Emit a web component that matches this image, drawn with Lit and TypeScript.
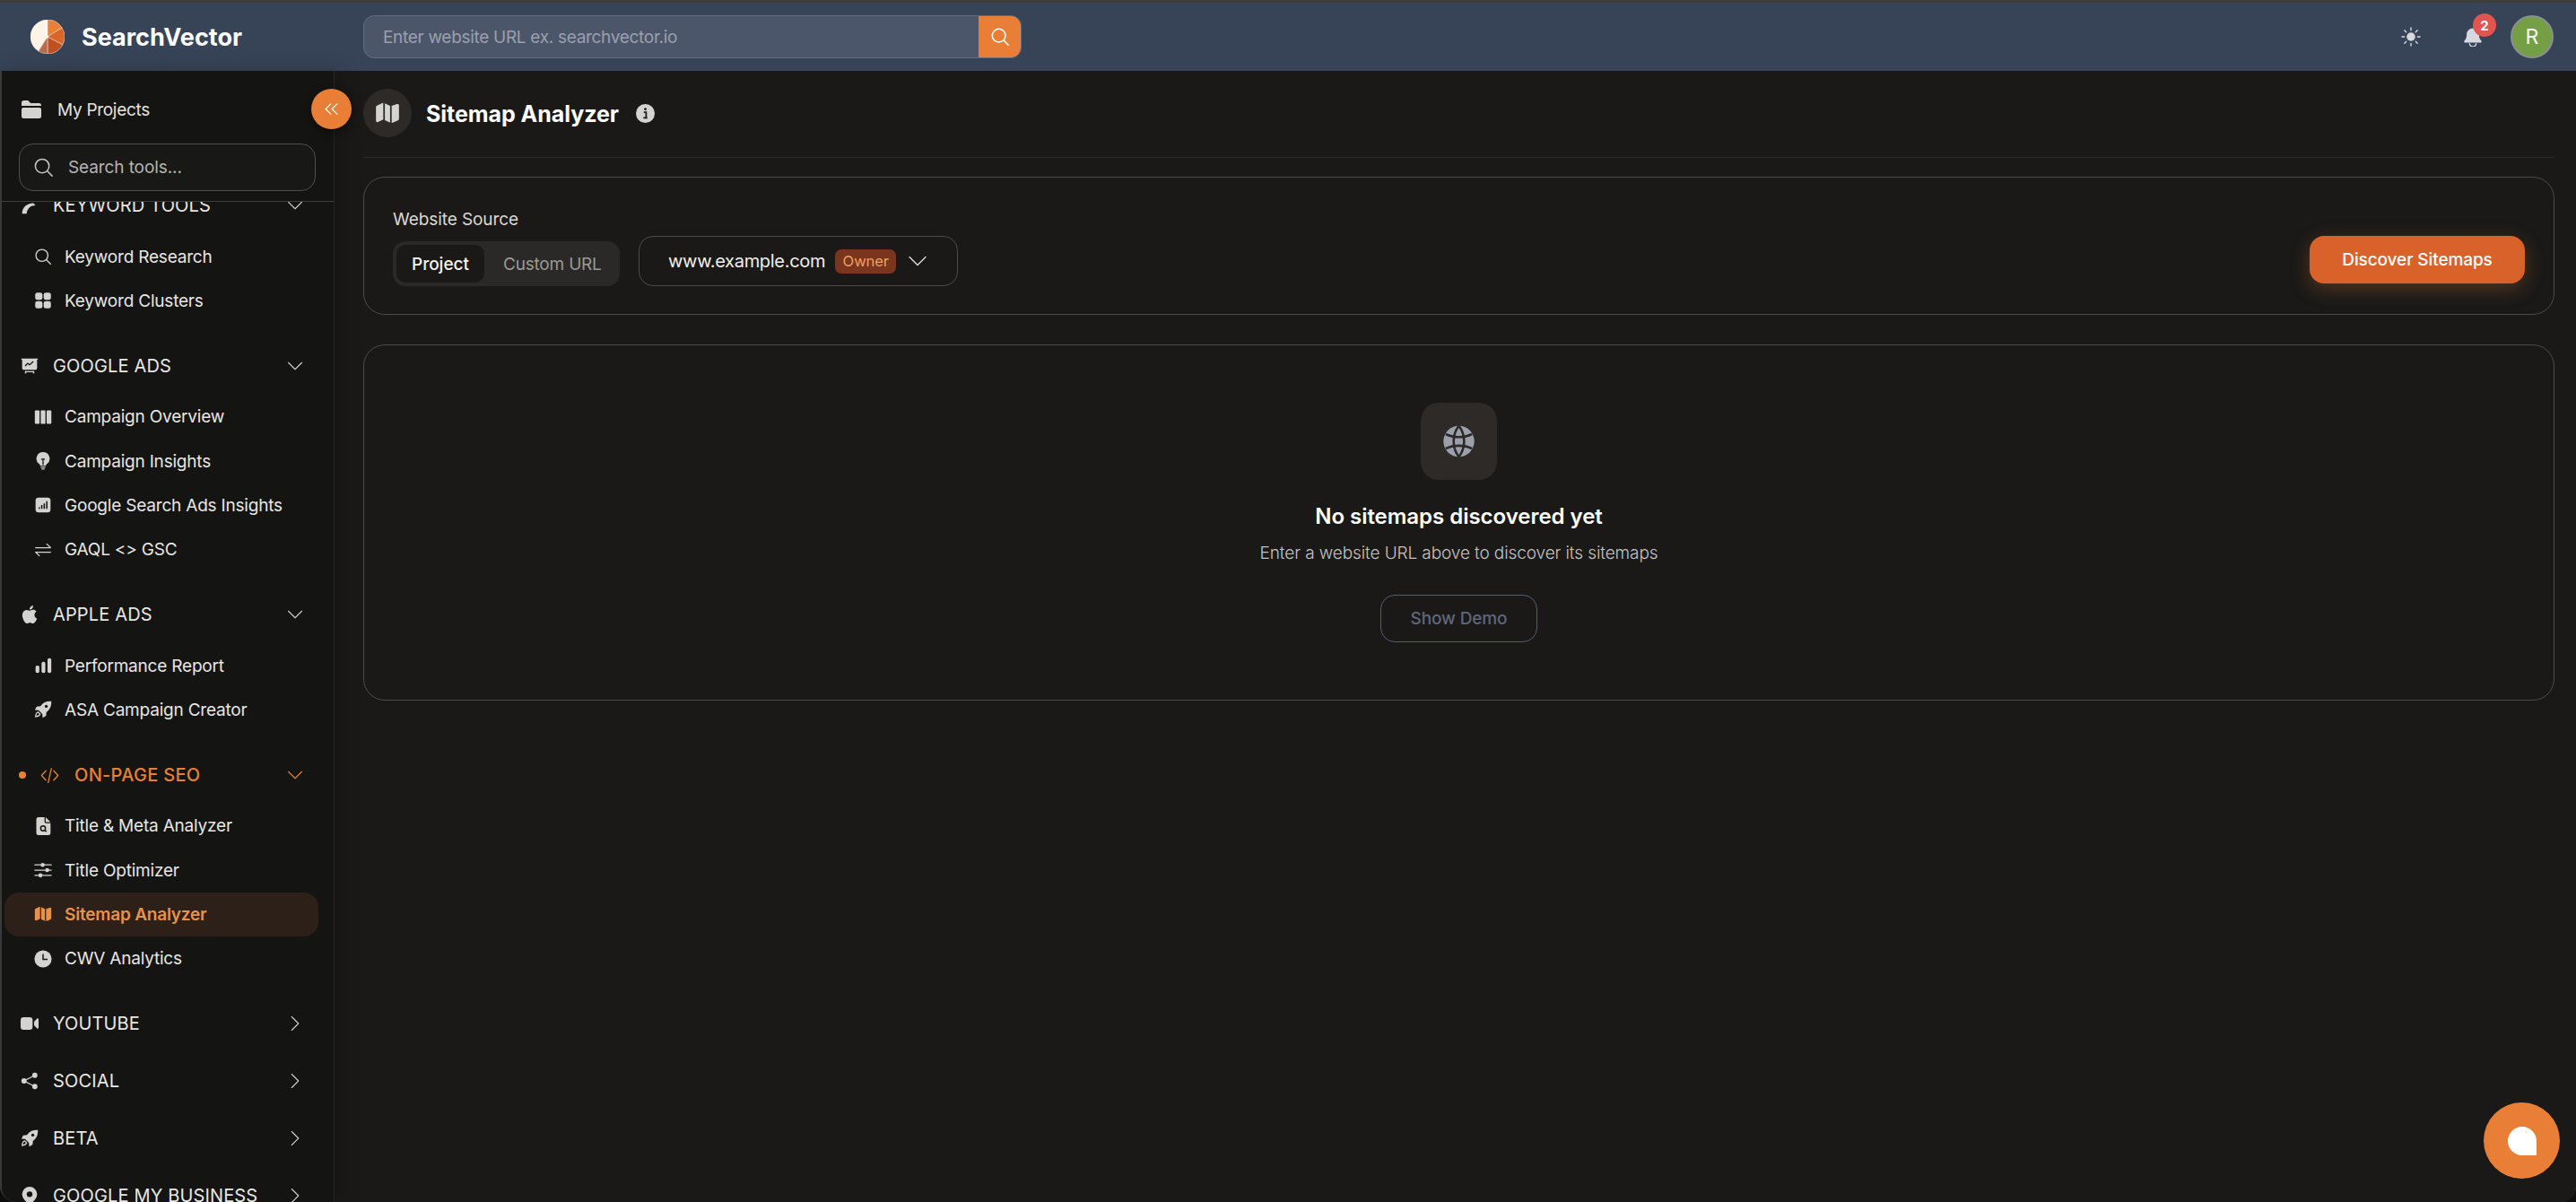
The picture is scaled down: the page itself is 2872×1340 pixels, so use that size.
import { LitElement, html, css, svg } from "lit";
import { customElement } from "lit/decorators.js";

const stroke = (body: unknown, w = 2) => html`<svg viewBox="0 0 24 24" fill="none" stroke="currentColor" stroke-width=${w} stroke-linecap="round" stroke-linejoin="round">${body}</svg>`;
const solid = (body: unknown) => html`<svg viewBox="0 0 24 24" fill="currentColor">${body}</svg>`;
const DARK = "#141413";

const I: Record<string, () => unknown> = {
  search: () => stroke(svg`<circle cx="10.5" cy="10.5" r="8"/><path d="M16.5 16.5 22 22"/>`, 1.6),
  folder: () => solid(svg`<path d="M1 7V4.5A2.5 2.5 0 0 1 3.500 2h4.700l3 3h9.300A2.500 2.500 0 0 1 23 7.300V8H1z"/><path d="M3 10h18a2 2 0 0 1 2 2v7.500a2.500 2.500 0 0 1-2.500 2.500h-17A2.500 2.500 0 0 1 1 19.500V12a2 2 0 0 1 2-2z"/>`),
  keytool: () => solid(svg`<path d="M2 23c0-8 6-14 15-14l3 3c-7 0-11 4-12 11z"/>`),
  grid: () => solid(svg`<rect x="1.500" y="1.500" width="9.700" height="9.700" rx="2.800"/><rect x="12.800" y="1.500" width="9.700" height="9.700" rx="2.800"/><rect x="1.500" y="12.800" width="9.700" height="9.700" rx="2.800"/><rect x="12.800" y="12.800" width="9.700" height="9.700" rx="2.800"/>`),
  board: () => solid(svg`<path d="M1 2h22v1.500h-1V15a2 2 0 0 1-2 2H4a2 2 0 0 1-2-2V3.500H1z"/><path d="M6 18.500h2L7.500 22H5.500zM16 18.500h2l.500 3.500h-2zM8 19h8v1.500H8z"/><path d="M6 12l3.500-3.500 2.500 2 5-4.500" fill="none" stroke="${DARK}" stroke-width="1.600"/>`),
  columns: () => solid(svg`<rect x="1" y="3" width="6.300" height="18" rx="1.200"/><rect x="8.900" y="3" width="6.300" height="18" rx="0.500"/><rect x="16.800" y="3" width="6.300" height="18" rx="1.200"/>`),
  bulb: () => solid(svg`<path d="M12 0a8.800 8.800 0 0 0-5.200 15.900c.800.600 1.400 1.400 1.400 2.300h7.600c0-.900.600-1.700 1.400-2.300A8.800 8.800 0 0 0 12 0z"/><path d="M8.800 19.500h6.400v1.500H8.800zM10 22h4v1.500h-4z"/><path d="M9.500 9.500h5M12 9.500v8" fill="none" stroke="${DARK}" stroke-width="1.500"/>`),
  report: () => solid(svg`<rect x="2" y="2" width="20" height="20" rx="4"/><path d="M7 17v-2M10.300 17v-5M13.600 17v-7M17 17V7" fill="none" stroke="${DARK}" stroke-width="1.800"/>`),
  arrows: () => stroke(svg`<path d="M2 9h20l-5-5M22 15H2l5 5"/>`, 1.500),
  apple: () => solid(svg`<path d="M12.152 6.896c-.948 0-2.415-1.078-3.960-1.040-2.040.027-3.910 1.183-4.961 3.014-2.117 3.675-.546 9.103 1.519 12.090 1.013 1.454 2.208 3.090 3.792 3.039 1.520-.065 2.090-.987 3.935-.987 1.831 0 2.350.987 3.960.948 1.637-.026 2.676-1.480 3.676-2.948 1.156-1.688 1.636-3.325 1.662-3.415-.039-.013-3.182-1.221-3.220-4.857-.026-3.040 2.480-4.494 2.597-4.559-1.429-2.090-3.623-2.324-4.390-2.376-2-.156-3.675 1.090-4.610 1.090zM15.530 3.830c.843-1.012 1.400-2.427 1.245-3.830-1.207.052-2.662.805-3.532 1.818-.780.896-1.454 2.338-1.273 3.714 1.338.104 2.715-.688 3.559-1.701"/>`),
  bars: () => solid(svg`<rect x="2" y="12" width="5" height="10" rx="2.200"/><rect x="10" y="7" width="5" height="15" rx="2.200"/><rect x="18" y="2" width="5" height="20" rx="2.200"/>`),
  rocket: () => solid(svg`<path d="M23 1c-6-.500-11 1.500-14.500 6.500L3.500 8 1 12.500l5 .500 5 5 .500 5 4.500-2.500.500-5C21.500 12 23.500 7 23 1z"/><circle cx="16.300" cy="7.700" r="2" fill="${DARK}"/><path d="M5.500 15.500c-2 .500-3 2-3.500 6 3.500-.500 5.500-1.500 6-3.500z" fill="none" stroke="currentColor" stroke-width="1.500"/>`),
  code: () => stroke(svg`<path d="M7 6 1.500 12 7 18M17 6l5.500 6L17 18M14 3l-4 18"/>`, 1.500),
  docsearch: () => solid(svg`<path d="M3 3a3 3 0 0 1 3-3h8v6a2 2 0 0 0 2 2h6v13a3 3 0 0 1-3 3H6a3 3 0 0 1-3-3z"/><path d="M15.500 0 22 6.500H16a.500.500 0 0 1-.500-.500z"/><circle cx="12" cy="15" r="3.200" fill="none" stroke="${DARK}" stroke-width="1.800"/><path d="m14.500 17.500 2 2" stroke="${DARK}" stroke-width="1.800"/>`),
  sliders: () => stroke(svg`<path d="M1 5h8M14 5h9M1 12h14M20 12h3M1 19h5M11 19h12" stroke-width="1.500"/><circle cx="11.500" cy="5" r="2" fill="currentColor"/><circle cx="17.500" cy="12" r="2" fill="currentColor"/><circle cx="8.500" cy="19" r="2" fill="currentColor"/>`, 1.500),
  map: () => solid(svg`<path d="M8 2.600V18.300L3 20.600c-.900.400-2-.200-2-1.300V6.500c0-.700.400-1.300 1-1.600L7 2.500c.400-.200 1-.100 1 .100zM9.500 2.800l5 2.400v16l-5-2.400zM16 5.200V21.200c0 .200.600.300 1 .100l5-2.200c.600-.300 1-.900 1-1.600V4.800c0-1.100-1.100-1.700-2-1.300z"/>`),
  clock: () => solid(svg`<circle cx="12" cy="12" r="11.500"/><path d="M12 5.500V12.500h6" fill="none" stroke="${DARK}" stroke-width="1.800"/>`),
  video: () => solid(svg`<rect x="0" y="3.500" width="16" height="17" rx="4"/><path d="M18 9.500 22 5.500c.700-.600 2-.100 2 1v11c0 1.100-1.300 1.600-2 1l-4-4z"/>`),
  share: () => solid(svg`<circle cx="19" cy="4.500" r="3.500"/><circle cx="4.500" cy="12" r="3.500"/><circle cx="19" cy="19.500" r="3.500"/><path d="M19 4.500 4.500 12 19 19.500" fill="none" stroke="currentColor" stroke-width="1.600"/>`),
  pin: () => solid(svg`<path d="M12 0a10 10 0 0 0-10 10c0 6.500 7.500 12.500 10 14 2.500-1.500 10-7.500 10-14A10 10 0 0 0 12 0z"/><circle cx="12" cy="10" r="3.800" fill="${DARK}"/>`),
  down: () => stroke(svg`<path d="M3 7.500 12 16.500 21 7.500"/>`, 1.300),
  right: () => stroke(svg`<path d="M7.500 3 16.500 12 7.500 21"/>`, 1.300),
  dbl: () => stroke(svg`<path d="M11 4 3 12l8 8M21 4l-8 8 8 8"/>`, 1.700),
  sun: () => html`<svg viewBox="0 0 24 24" fill="currentColor" stroke="currentColor" stroke-width="1.500" stroke-linecap="round"><circle cx="12" cy="12" r="5.200" stroke="none"/><path d="M12 1v3M12 20v3M1 12h3M20 12h3M4.200 4.200l2 2M17.800 17.800l2 2M4.200 19.800l2-2M17.800 6.200l2-2"/></svg>`,
  bell: () => solid(svg`<path d="M12 1.500A7.500 7.500 0 0 0 4.500 9c0 4-1 6-3 8.300-.500.600-.100 1.700.800 1.700h19.400c.900 0 1.300-1.100.800-1.700-2-2.300-3-4.300-3-8.300A7.500 7.500 0 0 0 12 1.500z"/><path d="M8 20a4 4 0 0 0 8 0" fill="none" stroke="currentColor" stroke-width="1.600"/>`),
  info: () => solid(svg`<circle cx="12" cy="12" r="12"/><circle cx="12" cy="6.500" r="1.600" fill="#1a1918"/><path d="M10 10.500h3v7h1.500M9.500 17.500h3" fill="none" stroke="#1a1918" stroke-width="2"/>`),
  globe: () => solid(svg`<circle cx="12" cy="12" r="11.800"/><g fill="none" stroke="#2d2a28" stroke-width="1.800"><path d="M12 .200C9 4 8 8 8 12s1 8 4 11.800M12 .200C15 4 16 8 16 12s-1 8-4 11.800"/><path d="M2 6.500c3 1.500 6 2.200 10 2.200s7-.700 10-2.200M2 17.500c3-1.500 6-2.200 10-2.200s7 .700 10 2.200"/></g>`),
};

function wedge(a0: number, a1: number, color: string) {
  const p = (a: number) => {
    const r = (a * Math.PI) / 180;
    return `${(19 + 19 * Math.sin(r)).toFixed(2)} ${(19 - 19 * Math.cos(r)).toFixed(2)}`;
  };
  const large = a1 - a0 > 180 ? 1 : 0;
  return svg`<path d="M19 19L${p(a0)}A19 19 0 ${large} 1 ${p(a1)}Z" fill=${color} stroke="#fdf3e7" stroke-width=".5"/>`;
}

const logo = () => html`<svg class="logo" viewBox="0 0 38 38">
  ${wedge(212, 360, "#fdf3e7")}${wedge(0, 58, "#ea7f36")}${wedge(58, 118, "#da652a")}${wedge(118, 180, "#bf5022")}${wedge(180, 212, "#b66c4e")}
  <circle cx="19" cy="19" r="1.200" fill="#fff"/>
</svg>`;

type Item = { i: string; t: string; active?: boolean };
type Group = { i: string; t: string; open?: boolean; active?: boolean; items?: Item[] };

const groups: Group[] = [
  { i: "keytool", t: "KEYWORD TOOLS", open: true, items: [{ i: "search", t: "Keyword Research" }, { i: "grid", t: "Keyword Clusters" }] },
  { i: "board", t: "GOOGLE ADS", open: true, items: [{ i: "columns", t: "Campaign Overview" }, { i: "bulb", t: "Campaign Insights" }, { i: "report", t: "Google Search Ads Insights" }, { i: "arrows", t: "GAQL <> GSC" }] },
  { i: "apple", t: "APPLE ADS", open: true, items: [{ i: "bars", t: "Performance Report" }, { i: "rocket", t: "ASA Campaign Creator" }] },
  { i: "code", t: "ON-PAGE SEO", open: true, active: true, items: [{ i: "docsearch", t: "Title & Meta Analyzer" }, { i: "sliders", t: "Title Optimizer" }, { i: "map", t: "Sitemap Analyzer", active: true }, { i: "clock", t: "CWV Analytics" }] },
  { i: "video", t: "YOUTUBE" },
  { i: "share", t: "SOCIAL" },
  { i: "rocket", t: "BETA" },
  { i: "pin", t: "GOOGLE MY BUSINESS" },
];

@customElement("app-root")
export class AppRoot extends LitElement {
  static styles = css`
    :host { display: block; width: 100%; height: 100vh; background: #0e0e0e; font-family: "Inter", "Liberation Sans", sans-serif; color: #e9e7e4; }
    * { box-sizing: border-box; }
    svg { display: block; width: 100%; height: 100%; }
    .frame { height: 100%; padding: 3px 0 0 2px; display: flex; flex-direction: column; overflow: hidden; border-radius: 0 0 18px 18px; background: #3d3d3c; }
    header { height: 76px; flex: none; background: #374357; display: flex; align-items: center; padding-left: 34px; margin-left: -2px; padding-right: 25px; }
    .logo { width: 38px; height: 38px; flex: none; }
    .brand { margin-left: 19px; width: 314px; font-size: 27px; font-weight: 700; color: #fff; letter-spacing: 0; }
    .url { width: 734px; height: 48px; display: flex; border: 1px solid #5f6b80; border-radius: 12px; background: #4c566a; overflow: hidden; }
    .url span { flex: 1; align-self: center; padding-left: 21px; font-size: 19px; color: #9aa0ac; letter-spacing: -0.3px; }
    .url i { width: 48px; margin: -1px; background: #e97f36; color: #fff; padding: 13px; display: block; }
    .tools { margin-left: auto; display: flex; align-items: center; }
    .sun { width: 22px; height: 22px; color: #d7d9de; margin-right: 47px; }
    .bell { width: 22px; height: 22px; color: #d7d9de; position: relative; margin-right: 31px; }
    .badge { position: absolute; left: 11px; top: -15px; width: 26px; height: 26px; border-radius: 50%; background: #e25450; color: #fff; font-size: 15px; font-weight: 700; display: grid; place-items: center; }
    .avatar { width: 48px; height: 48px; border-radius: 50%; background: #749f45; border: 2px solid #8b8f92; color: #f4f6f0; display: grid; place-items: center; font-size: 23px; font-weight: 400; }
    .body { flex: 1; min-height: 0; display: flex; }
    aside { width: 371px; flex: none; background: #141413; border-right: 1px solid #272726; position: relative; display: flex; flex-direction: column; box-shadow: 6px 0 24px rgba(0,0,0,.18); z-index: 1; border-bottom-left-radius: 16px; }
    .top { height: 146px; flex: none; border-bottom: 1px solid #3e3e3d; padding: 0 19px; }
    .proj { height: 86px; display: flex; align-items: center; padding: 0 2px; gap: 17px; font-size: 19px; letter-spacing: -0.3px; color: #e5e3e0; }
    .proj .ic { width: 24px; height: 24px; color: #d5d3d0; }
    .box { width: 331px; height: 53px; margin-top: -5px; border: 1px solid #4f4f4e; border-radius: 16px; background: #181817; display: flex; align-items: center; padding-left: 15px; gap: 16px; color: #b6b5b2; font-size: 19px; letter-spacing: -0.1px; }
    .box .ic { width: 23px; height: 23px; color: #c8c6c3; }
    .toggle { position: absolute; left: 345px; top: 20px; width: 45px; height: 45px; border-radius: 50%; background: #e97f36; color: #fff; padding: 14px; box-shadow: 0 4px 12px rgba(0,0,0,.45); z-index: 2; }
    nav { flex: 1; min-height: 0; overflow: hidden; border-bottom-left-radius: 16px; }
    .scroll { margin-top: -27.600px; }
    .gh { height: 64px; display: flex; align-items: center; padding: 0 33px 0 21px; font-size: 20px; letter-spacing: 0.15px; font-weight: 400; color: #e8e6e3; }
    .gh .ic { width: 20px; height: 20px; color: #d5d3d0; flex: none; margin-right: 16px; }
    .gh .chev { width: 20px; height: 20px; color: #d0cecb; margin-left: auto; flex: none; }
    .gh.on { color: #e98033; font-weight: 500; padding-left: 19px; letter-spacing: 0.3px; }
    .gh.on .ic { color: #e98033; width: 21px; height: 21px; margin-right: 17px; }
    .gh.on .chev { color: #e98033; }
    .dot { width: 8px; height: 8px; border-radius: 50%; background: #e98033; margin-right: 16px; flex: none; }
    .items { padding-bottom: 16px; }
    .it { height: 49.33px; display: flex; align-items: center; padding-left: 36px; margin: 0 17px 0 0; font-size: 19px; letter-spacing: -0.2px; color: #e8e6e3; position: relative; }
    .it .ic { width: 20px; height: 20px; color: #d5d3d0; margin-right: 14px; flex: none; }
    .it.on { color: #ea9148; font-weight: 600; background: #2c2019; border-radius: 16px; margin-left: 3px; padding-left: 33px; }
    .it.on .ic { color: #ea9148; }
    main { flex: 1; min-width: 0; background: #1a1918; padding: 20px 24px 0 32px; position: relative; border-bottom-right-radius: 16px; }
    .ph { height: 77px; border-bottom: 1px solid #2b2a29; display: flex; align-items: flex-start; }
    .phi { width: 54px; height: 54px; border-radius: 50%; background: #2d2a28; padding: 13px; color: #d5d3d0; flex: none; }
    .ph h1 { margin: 0 0 0 16px; height: 54px; line-height: 56px; font-size: 25px; font-weight: 650; color: #fff; letter-spacing: -0.05px; }
    .inf { width: 21px; height: 21px; color: #d5d3d0; margin: 17px 0 0 19px; }
    .card { border: 1px solid #4b4b4a; border-radius: 24px; }
    .c1 { margin-top: 21px; height: 154px; padding: 0 32px; display: flex; align-items: flex-end; }
    .srcl { display: flex; flex-direction: column; padding-bottom: 31px; }
    .lbl { font-size: 19px; letter-spacing: -0.08px; color: #dad8d5; margin-bottom: 12px; line-height: 24px; }
    .seg { width: 253px; height: 50px; background: #2a2928; border-radius: 14px; padding: 4px; display: flex; align-items: center; font-size: 19px; }
    .seg b { width: 98px; height: 42px; border-radius: 10px; background: #1a1918; color: #f5f3f0; display: grid; place-items: center; font-weight: 500; letter-spacing: 0; }
    .seg span { margin-left: 21px; color: #9b9a97; letter-spacing: -0.2px; }
    .sel { margin: 0 0 31px 21px; width: 356px; height: 56px; border: 1px solid #4b4b4a; border-radius: 16px; display: flex; align-items: center; padding-left: 32px; font-size: 20px; color: #f1efec; letter-spacing: -0.3px; }
    .own { margin-left: 11px; width: 68px; height: 27px; border-radius: 7px; background: #7a351e; color: #f0a060; font-size: 16.500px; display: grid; place-items: center; letter-spacing: -0.1px; flex: none; }
    .sel .ic { width: 24px; height: 24px; margin-left: 12px; color: #e2e0dd; flex: none; }
    .cta { margin: 0 0 34px auto; width: 240px; height: 53px; border-radius: 16px; background: #d9622b; color: #fff; display: grid; place-items: center; font-size: 19px; font-weight: 500; letter-spacing: -0.1px; box-shadow: 0 6px 22px rgba(233,127,54,.28); }
    .c2 { margin-top: 33px; height: 397px; display: flex; flex-direction: column; align-items: center; padding-top: 64px; }
    .ei { width: 85px; height: 86px; border-radius: 20px; background: #2d2a28; padding: 25px; color: #9ca0ab; }
    .c2 h2 { margin: 26px 0 0; font-size: 24px; line-height: 30px; font-weight: 600; color: #fff; letter-spacing: -0.03px; }
    .c2 p { margin: 14px 0 0; font-size: 19px; line-height: 24px; font-weight: 300; color: #c4c3c0; letter-spacing: -0.1px; }
    .demo { margin-top: 33.500px; width: 175px; height: 53px; border: 1px solid #535c72; border-radius: 16px; display: grid; place-items: center; color: #5f677c; font-size: 19px; font-weight: 500; letter-spacing: -0.1px; }
    .chat { position: absolute; left: 2396px; bottom: 26px; width: 85px; height: 85px; border-radius: 50%; background: #e97f36; display: grid; place-items: center; }
    .chat i { display: block; width: 32px; height: 32px; background: #fff; border-radius: 50% 50% 0 50%; }
  `;

  private group(g: Group) {
    return html`<div class="gh ${g.active ? "on" : ""}">
        ${g.active ? html`<span class="dot"></span>` : ""}
        <span class="ic">${I[g.i]()}</span><span>${g.t}</span>
        <span class="chev">${g.open ? I.down() : I.right()}</span>
      </div>
      ${g.items
        ? html`<div class="items">
            ${g.items.map((it) => html`<div class="it ${it.active ? "on" : ""}"><span class="ic">${I[it.i]()}</span>${it.t}</div>`)}
          </div>`
        : ""}`;
  }

  render() {
    return html`<div class="frame">
      <header>
        ${logo()}
        <div class="brand">SearchVector</div>
        <div class="url"><span>Enter website URL ex. searchvector.io</span><i>${I.search()}</i></div>
        <div class="tools">
          <div class="sun">${I.sun()}</div>
          <div class="bell">${I.bell()}<span class="badge">2</span></div>
          <div class="avatar">R</div>
        </div>
      </header>
      <div class="body">
        <aside>
          <div class="top">
            <div class="proj"><span class="ic">${I.folder()}</span>My Projects</div>
            <div class="box"><span class="ic">${I.search()}</span>Search tools...</div>
          </div>
          <div class="toggle">${I.dbl()}</div>
          <nav><div class="scroll">${groups.map((g) => this.group(g))}</div></nav>
        </aside>
        <main>
          <div class="ph">
            <div class="phi">${I.map()}</div>
            <h1>Sitemap Analyzer</h1>
            <div class="inf">${I.info()}</div>
          </div>
          <section class="card c1">
            <div class="srcl">
              <div class="lbl">Website Source</div>
              <div class="seg"><b>Project</b><span>Custom URL</span></div>
            </div>
            <div class="sel">www.example.com<span class="own">Owner</span><span class="ic">${I.down()}</span></div>
            <div class="cta">Discover Sitemaps</div>
          </section>
          <section class="card c2">
            <div class="ei">${I.globe()}</div>
            <h2>No sitemaps discovered yet</h2>
            <p>Enter a website URL above to discover its sitemaps</p>
            <div class="demo">Show Demo</div>
          </section>
          <div class="chat"><i></i></div>
        </main>
      </div>
    </div>`;
  }
}
